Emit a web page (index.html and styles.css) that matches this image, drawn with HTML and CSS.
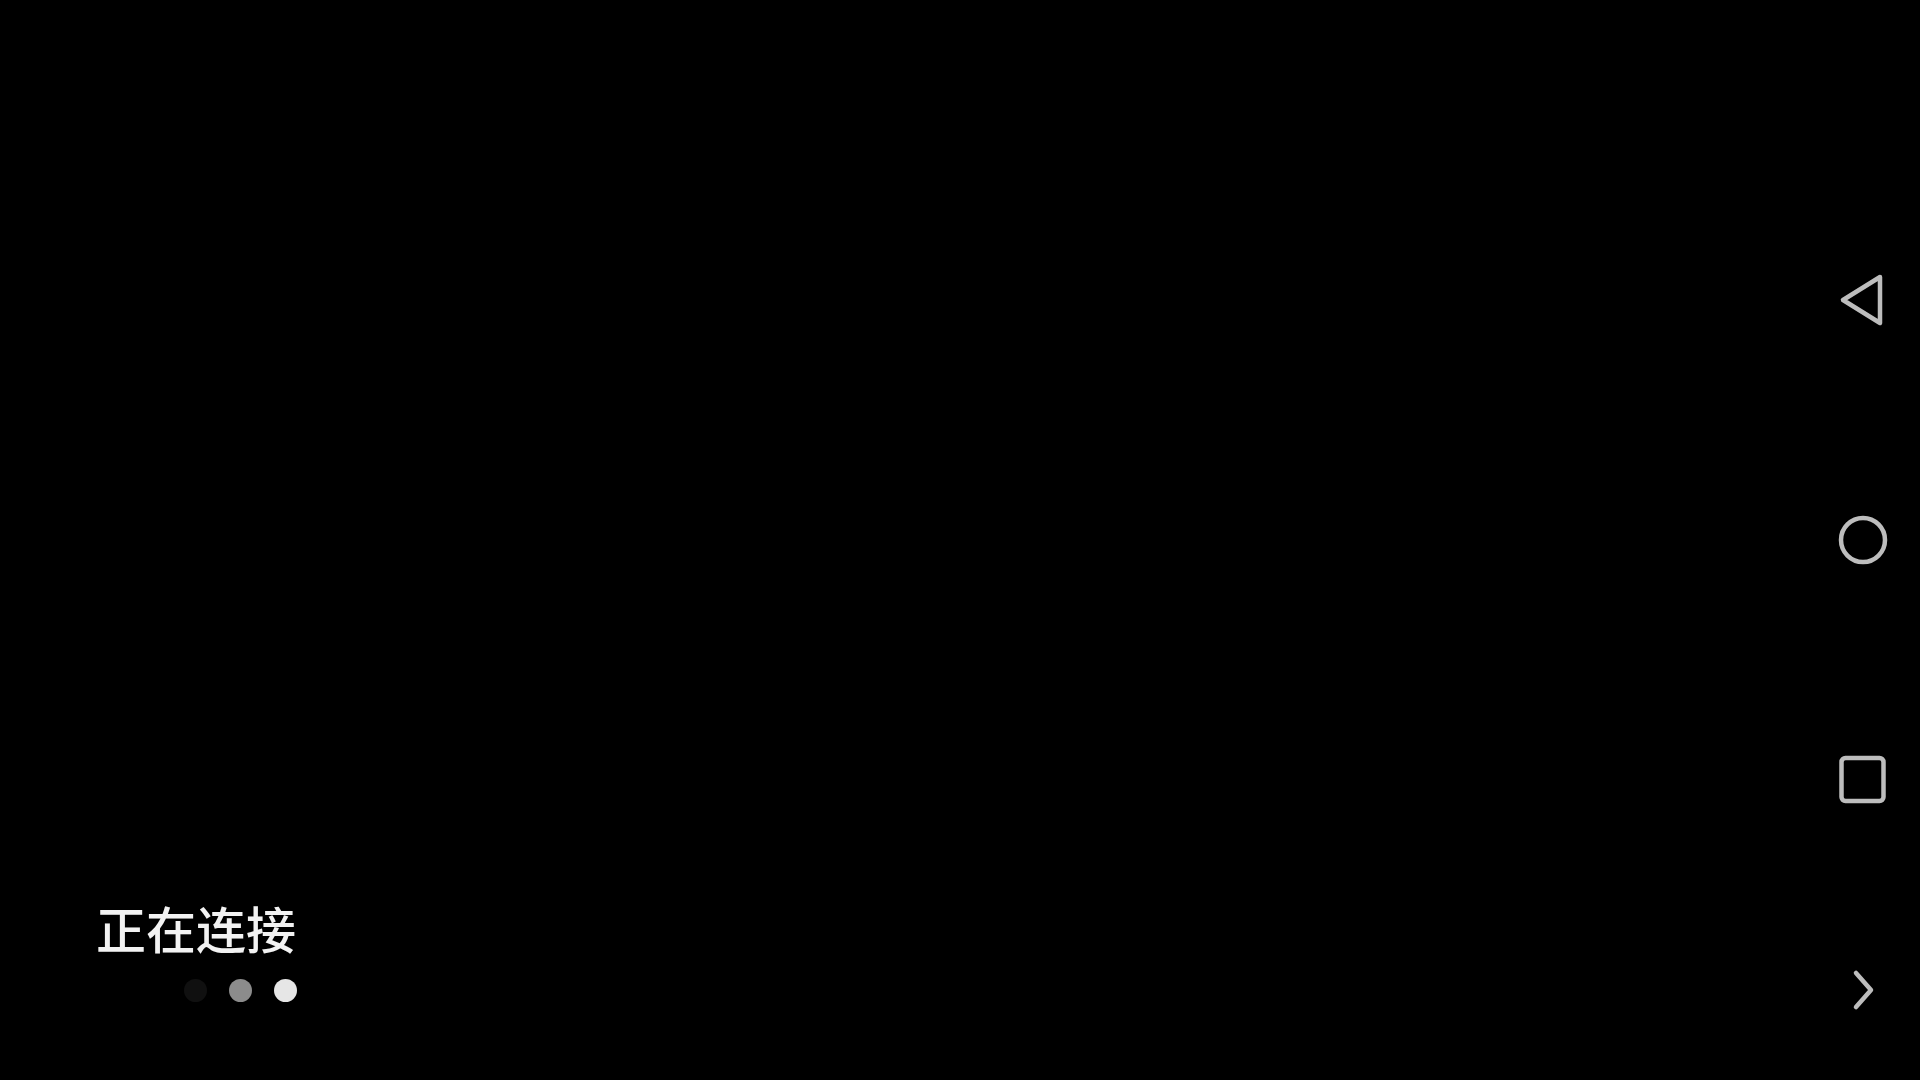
FILE: index.html
```html
<!DOCTYPE html>
<html lang="zh-CN">
<head>
    <meta charset="UTF-8">
    <meta name="viewport" content="width=device-width, initial-scale=1.0">
    <title>正在连接</title>
    <link rel="stylesheet" href="styles.css">
</head>
<body>
    <div class="screen">
        <div class="content">
            <div class="status">
                <div class="status-text">正在连接</div>
                <div class="dots">
                    <span class="dot dot-dim"></span>
                    <span class="dot dot-mid"></span>
                    <span class="dot dot-on"></span>
                </div>
            </div>
        </div>

        <div class="nav-bar">
            <div class="nav-slot">
                <svg width="48" height="56" viewBox="0 0 48 56">
                    <path d="M41 5 L4 28 L41 51 Z" fill="none" stroke="#bdbdbd" stroke-width="4.5" stroke-linejoin="round"/>
                </svg>
            </div>
            <div class="nav-slot">
                <svg width="52" height="52" viewBox="0 0 52 52">
                    <circle cx="26" cy="26" r="22" fill="none" stroke="#bdbdbd" stroke-width="4.5"/>
                </svg>
            </div>
            <div class="nav-slot">
                <svg width="50" height="50" viewBox="0 0 50 50">
                    <rect x="3.5" y="3" width="42" height="43" rx="4" fill="none" stroke="#bdbdbd" stroke-width="4.5"/>
                </svg>
            </div>
            <div class="nav-slot nav-slot-last">
                <svg width="30" height="42" viewBox="0 0 30 42">
                    <path d="M8 4 L23 21 L8 38" fill="none" stroke="#bdbdbd" stroke-width="4.5" stroke-linecap="round" stroke-linejoin="round"/>
                </svg>
            </div>
        </div>
    </div>
</body>
</html>
```

FILE: styles.css
```css
html, body {
    margin: 0;
    padding: 0;
    background: #000;
}

body {
    font-family: "Noto Sans CJK SC", "Noto Sans", sans-serif;
    color: #f2f2f2;
}

.screen {
    display: flex;
    width: 1920px;
    height: 1080px;
}

.content {
    flex: 1;
    display: flex;
    flex-direction: column;
    justify-content: flex-end;
    padding: 0 0 78px 96px;
}

.status {
    display: flex;
    flex-direction: column;
}

.status-text {
    font-size: 50px;
    line-height: 50px;
    font-weight: 500;
}

.dots {
    display: flex;
    gap: 22px;
    margin-top: 27px;
    padding-left: 88px;
}

.dot {
    width: 23px;
    height: 23px;
    border-radius: 50%;
}

.dot-dim {
    background: #101010;
}

.dot-mid {
    background: #8c8c8c;
}

.dot-on {
    background: #e6e6e6;
}

.nav-bar {
    width: 116px;
    display: flex;
    flex-direction: column;
    padding-top: 180px;
}

.nav-slot {
    height: 240px;
    display: flex;
    align-items: center;
    justify-content: center;
    padding-left: 2px;
}

.nav-slot-last {
    height: 180px;
}
```
